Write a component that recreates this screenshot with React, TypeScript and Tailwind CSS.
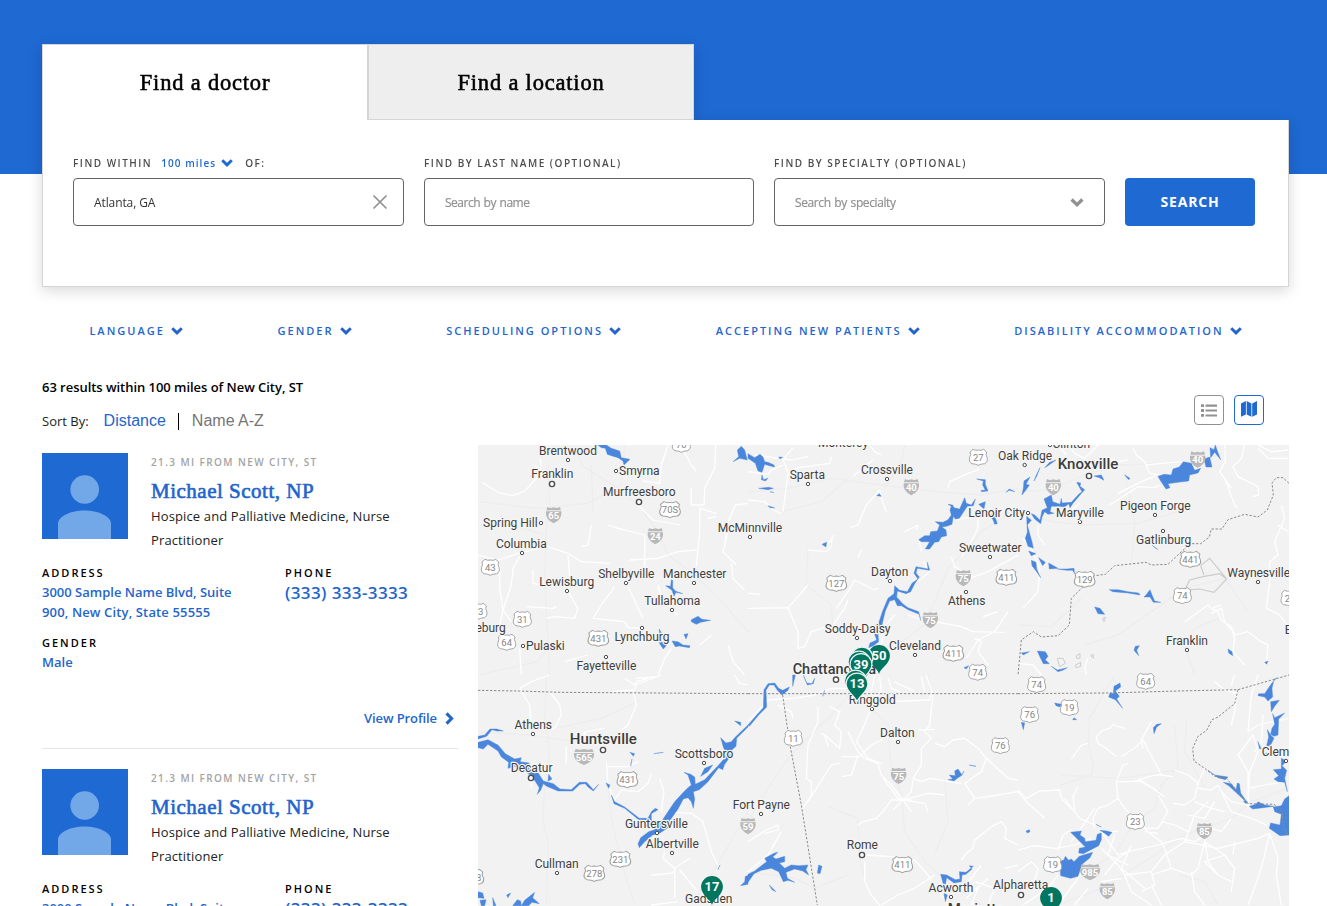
type TileId = "A" | "B" | "C" | "D" | "E" | "F";

// The map is drawn in six tiles, each in a grid three times finer than the page's pixels.
const ORIGIN: Record<TileId, [number, number]> = {
  A: [0, 0],
  B: [270, 0],
  C: [540, 0],
  D: [0, 230],
  E: [270, 230],
  F: [540, 230],
};
const TILES: TileId[] = ["A", "B", "C", "D", "E", "F"];

const ROADS: Record<TileId, string> = {
  A: "M12 112L60 142L105 152L140 138L180 95L190 60L186 40M0 330L60 345L130 322L210 305L270 325L310 350L395 355M125 335L105 370L100 420L75 495L60 560M65 360L65 430L75 495L100 530M270 330L275 400L270 440L300 490L290 520L230 515L205 520M390 240L420 250L500 270L500 365M340 240L330 300L310 305M455 345L540 340L600 320L655 315M570 0L550 60L545 115L495 108M610 5L640 60L655 80M713 0L710 70L680 130L678 180L640 180L640 130M715 205L665 190L665 260L655 365M410 425L370 480L345 520L440 530L450 548L490 550M450 425L495 520M540 420L550 460L600 510M170 60L200 100M750 260L735 320L775 360M760 355L765 400L800 435M715 215L690 220M775 175L750 230L740 300M165 375L165 415L210 425M700 570L665 600M580 610L560 640L540 690M260 650L330 630M145 485L225 490L235 484M125 610L130 690M480 180L525 225L605 240M810 175L775 180M750 600L765 650L800 690",
  B: "M0 80L60 88L70 75L105 60M105 200L120 85L150 68L245 55L250 35M0 165L50 170L75 195L100 205M400 30L380 20L365 0M375 45L320 90L345 70M395 135L405 175L415 200M395 135L355 180L330 240L307 248M600 130L605 110L660 85L690 75L690 65M180 315L235 320L250 305L252 282M235 305L258 270M135 8L105 45L120 80M0 490L120 488L150 455L180 420M120 488L150 560L150 610L170 605L190 560L250 540M300 465L290 490L245 555M265 490L310 425L320 405L380 435L390 428M440 510L410 545L400 600M525 350L545 380L510 410M625 225L690 210L690 250L665 300L640 335M520 320L515 290M610 335L620 365L675 395M560 530L640 545L675 560L770 562M780 500L740 560L690 585L655 640M705 515L750 500M560 535L480 510M680 580L700 590L690 620L720 660M470 260L510 240L505 255M330 340L340 315M0 445L38 448M20 30L130 45L180 35M640 410L720 380L810 330",
  C: "M120 0L145 30M150 0L170 25L200 40L240 0M345 10L355 30L380 50L395 85L430 90M385 60L430 55L500 50M275 180L360 125L410 128L425 120M185 175L160 195L130 205M680 0L670 40L645 65L660 95L720 125L722 150L705 155M620 0L622 50L605 80L640 130M720 10L750 40L810 40M60 240L60 270L80 300M15 280L40 310L65 370L60 440L15 490M620 100L650 180L660 190M790 180L800 220L770 290L780 330L755 350L755 410L745 490L785 510L810 545M580 490L600 500L610 525L640 545L650 570L690 560L730 590L750 600L745 660M585 488L610 480M640 545L650 580L645 620L680 660M205 690L200 665L210 640M0 655L45 660L70 690M780 240L810 260M580 505L610 490L620 530L640 555M500 530L570 480L580 490M720 0L760 20L810 15M260 35L300 50L330 45M420 90L370 110L300 145",
  D: "M125 40L160 20L215 0M125 40L155 90L160 160L230 160L250 120L245 90L215 50M400 50L465 45L475 90L450 150L430 165M440 10L470 30L550 0M470 45L475 20L510 10M300 205L325 170L380 160M265 215L265 265M385 275L450 275L480 260M385 260L390 330L410 375L430 345L480 350L510 325L520 295M545 310L558 350L550 410M545 440L590 412L640 415L675 440L700 530L725 580M560 530L555 550L590 580L635 550M590 580L590 670M605 585L655 645M520 600L575 595L590 590M520 690L600 680M0 200L60 205M160 280L160 340M320 170L310 205M770 0L785 25L810 30M540 5L475 10",
  E: "M0 140L60 75L135 70L200 60L250 40L300 40L395 65L430 80L545 75L550 50M535 0L555 60L545 150L530 170L550 190L520 220L520 270L495 310M210 95L210 140L180 210L175 310L190 320L190 360L165 400M245 95L275 110L260 150L280 170L275 220L230 180L220 175M230 180L240 215M365 110L345 160L325 200L360 250L400 265M300 170L330 230L350 250L390 265L400 300L430 330L465 375M280 245L335 245L370 210L400 195L420 180M330 240L310 300L280 305M275 265L250 270L180 380M560 205L590 215L615 195L650 190L690 220L715 250L780 310L810 315M715 250L700 290L650 325L680 370L720 365L810 350M680 370L660 390M495 310L520 320L545 310L640 325M495 315L490 350L470 370L435 405M465 375L430 375L405 410L385 430L345 440L330 450M465 375L540 355L590 360M465 375L490 410M465 375L530 385L540 410M405 310L450 370L490 375M510 165L560 163M350 540L430 545L500 555L540 600L600 690M350 560L350 620L370 660L395 692M400 690L450 660L500 640L560 600M0 500L40 475L55 465L90 450L90 465L50 475M100 470L60 540L0 590M640 555L655 535L675 520L680 495L730 455L760 440L775 460L770 490L810 510M370 50L380 0M395 5L400 50L385 60M420 10L430 40L455 50M440 20L500 50M90 90L130 110L135 130M520 5L530 50M640 650L700 570M655 670L720 610M670 690L690 640L640 640M720 690L740 640L680 620M300 40L290 10M770 580L810 570",
  F: "M0 345L25 370L65 348L125 345L130 370L165 405L140 370M0 350L30 385L80 430M160 252L190 210L210 205M290 145L275 160L255 165L235 185L240 205L265 220L295 245M285 150L320 160M310 245L355 215L375 195L415 270L430 300L465 305M375 220L370 195L400 140M295 320L315 270L330 265M295 320L370 320L405 340L415 345M295 320L300 370L270 390L240 400L225 430L230 460M360 310L390 330L440 365M345 320L410 300L430 300M470 285L510 300L540 325L560 280M540 325L530 370L500 390L465 385M540 340L580 345L600 330M530 380L580 400L620 410M300 370L320 400L390 470L430 500L440 520M230 450L185 430L170 410L165 365L180 335M0 525L50 512L110 520L170 510L220 490M160 500L210 430L230 400M120 525L135 480L160 465M260 600L300 550L330 530L420 510L490 490L530 500L560 480M250 520L300 570L320 600L400 590L410 630L370 650M400 590L440 540L500 500L530 420L570 380M440 520L460 580L520 600L540 580M320 600L340 650L400 690M460 580L400 600M250 620L310 610M210 640L170 690M120 690L210 570M560 490L570 560L600 600L640 620M560 500L620 540L650 580L640 650M540 580L560 500M500 500L600 520L720 490L755 475L780 550L775 600L790 690M755 475L735 560L720 610L690 690M600 330L640 410L700 430L745 450M610 350L640 380L690 390L710 400M690 395L695 290L720 230L705 180L660 240L690 290L690 380M690 340L740 330L800 320M590 20L620 45L655 55L650 110L640 150M650 0L640 30M720 0L700 60L690 170L720 150L810 130M735 120L730 200L710 230M330 530L300 540L250 470L300 470M380 470L420 475M620 540L560 560L600 600M400 630L430 690M510 470L470 450L430 440M650 500L645 540M520 590L530 650L560 690M290 480L270 540L330 570M340 510L310 580L380 640M640 430L610 470L580 460M15 690L90 640L120 600M0 590L40 560L60 580L50 620M590 380L560 430L510 420M420 360L450 410L420 460L380 460",
};

const FAINT: Record<TileId, string> = {
  A: "M210 60L215 180L205 240L200 400L215 690M290 0L310 60L420 130L480 180L540 260L570 330L640 380L740 480L810 560M0 240L100 240L200 270M440 0L430 120L330 175L180 190L0 170M340 60L345 200M0 690L180 650L215 600",
  B: "M0 140L120 130L250 100L400 120L560 140L700 150L810 130M100 200L220 170L300 100M810 190L700 260L640 330L600 370L560 470L530 540L420 620M180 310L175 420L250 480L255 560M470 0L460 50L410 130",
  C: "M0 140L100 135L200 90L300 60L450 55L530 50L600 30M10 200L100 230L200 240L360 235L480 200M200 600L300 570L400 500L500 430L620 400L690 500M530 690L500 600L530 550L600 520M320 80L350 230L340 360M0 540L100 545L190 460",
  D: "M205 0L200 140L215 220L200 330L195 440L210 500L205 690M230 160L370 130L480 80M390 340L400 430L430 560L470 690M810 410L700 600L640 690M0 170L150 180L300 200",
  E: "M0 440L60 340L120 250L250 120L330 30M370 100L420 150L430 300L460 350L470 470L530 560L600 620L700 690M240 395L330 430L335 550L350 610M0 590L140 610L200 640L300 600M540 0L550 60M590 320L600 440L560 540M335 60L345 0",
  F: "M215 120L210 200L225 270L220 300L130 330M470 150L480 280L430 330L410 400L350 440L290 540L200 590M810 340L700 380L640 430L500 480L380 560L250 640L120 690M505 140L500 230L540 300L560 340M290 0L260 50L215 130M130 300L300 310L480 285M600 690L560 620L480 600",
};

const WATER: Record<TileId, string> = {
  A: "M360 0L370 8L382 10L388 28L400 32L420 38L435 48L438 60L456 43L430 38L425 18L400 10L385 0ZM765 50L782 35L778 15L790 4L800 15L808 45L785 40ZM563 422L578 424L580 404L584 406L584 428L592 438L614 446L594 442L588 454L582 436ZM640 524L660 514L672 523L698 526L668 532L655 538L640 530ZM544 552L552 568L550 590L566 600L556 612L545 596ZM582 588L600 590L615 600L636 602L634 608L604 603L592 605ZM618 568L630 566L624 582Z",
  B: "M0 26L20 38L36 28L45 36L50 50L60 52L78 60L80 66L64 62L50 58L42 82L30 78L22 55L0 40ZM92 36L104 37L96 42ZM42 90L46 104L60 100L52 108L40 104ZM32 130L62 127L76 130L60 134ZM60 182L80 189L66 188ZM66 140L78 143ZM386 152L394 146L400 154ZM222 298L236 292L234 306ZM686 102L712 104L712 118L720 138L700 140L700 136L712 136L704 120L706 108ZM774 142L784 132L800 140L784 136ZM692 178L712 170L708 192ZM512 284L530 272L545 272L548 260L568 258L575 240L562 230L585 232L600 224L610 210L606 195L610 184L600 178L614 180L618 188L635 192L650 158L655 175L670 180L682 162L676 182L658 184L650 196L634 220L622 222L616 214L612 238L596 244L582 246L594 255L596 272L580 276L572 290L560 292L545 312L532 312L545 290L520 290ZM720 205L740 212L748 236L740 238L735 224ZM440 422L455 436L478 440L492 415L510 402L498 385L504 365L540 372L538 352L545 376L508 370L504 384L514 396L500 416L488 440L474 446L448 438L446 456L464 476L480 488L512 500L518 526L514 508L480 494L460 482L448 482L440 464L425 468L412 498L404 530L398 562L390 566L392 590L376 602L362 608L366 594L386 585L380 568L388 560L394 528L404 498L420 460L438 446ZM648 668L662 662L655 672Z",
  C: "M114 45L95 52L80 68L90 62ZM66 68L54 92L48 108L56 94ZM36 96L18 108L16 130L12 150L26 132L34 120L24 118ZM78 162L100 150L104 170L126 178L130 160L132 174L160 172L182 148L192 140L176 112L188 114L186 124L200 134L186 150L164 176L156 188L152 176L140 186L124 184L100 184L96 200L108 205L90 208L80 200L72 216L68 236L50 222L40 206L50 210L66 226L72 196L88 188ZM228 93L250 90L258 106L244 98ZM320 90L336 100L332 104ZM420 94L438 88L460 90L465 72L484 66L496 50L520 55L530 76L548 70L540 84L515 90L512 108L480 112L450 116L456 128L444 132L428 108ZM558 42L575 36L582 66L564 66ZM576 8L588 14L592 0L596 12L608 44L590 22L578 38ZM26 214L40 226L28 240L34 262L42 290L46 310L30 304L22 280L28 262ZM32 318L54 326L40 332ZM40 346L54 352L56 372L68 398L56 380L42 362ZM62 338L82 352L74 362ZM92 354L120 370L94 372ZM118 372L146 372L168 370L170 386L164 376L146 376ZM402 300L420 314L408 306ZM274 434L300 434L330 440L362 444L366 450L330 444L284 440ZM384 450L396 434L402 450L410 468L428 472L406 472L396 456L378 456ZM230 486L246 490L260 508L240 506ZM352 604L364 602L356 616L362 632L348 616ZM10 624L34 620L16 630ZM58 618L82 620L90 634L82 644L94 656L76 656L66 636ZM100 664L118 675L148 668L134 676L120 680ZM630 612L642 620L644 632L632 624ZM740 652L750 648L746 658Z",
  D: "M0 184L20 180L36 162L56 162L76 168L56 168L42 164L26 184L0 192ZM0 202L30 194L60 210L82 236L110 252L130 248L126 260L154 264L150 276L178 290L196 318L226 326L246 342L280 344L304 322L326 322L346 344L362 328L346 348L330 336L322 326L306 328L284 348L240 348L206 334L196 326L188 346L178 358L184 338L166 310L140 286L110 274L90 280L92 262L70 246L60 228L30 208L16 222L0 218ZM384 324L396 330L392 340ZM212 298L222 312L210 318ZM456 232L470 236L466 244ZM528 236L556 232ZM462 252L458 274ZM400 360L410 380L440 396L484 430L510 430L520 410L532 400L540 404L520 416L520 436L550 440L590 380L616 352L628 340L640 330L630 300L618 292L638 298L650 306L652 328L680 314L720 272L740 250L745 240L736 216L728 188L744 204L760 200L770 188L810 150L810 156L776 190L774 214L762 224L750 236L760 240L740 268L734 284L722 278L690 320L664 344L646 350L650 372L646 400L640 380L630 368L616 372L600 402L576 436L570 458L546 474L524 480L500 500L484 518L480 506L488 488L512 470L530 464L510 440L482 434L440 400L408 386ZM668 304L680 280L704 270L690 290ZM770 138L788 142L788 152ZM720 584L726 570ZM788 632L800 620L802 604L810 602L810 628ZM0 650L14 654L18 670L0 668ZM6 676L24 674L20 692L10 692ZM44 668L54 692L46 692ZM86 660L98 654L90 668ZM104 692L118 674L128 678L130 692ZM130 692L140 676L170 652L164 668L184 686L162 682L152 692Z",
  E: "M0 150L28 118L46 98L48 44L60 26L80 24L92 40L104 46L124 36L120 46L102 60L88 46L78 30L64 30L54 46L56 96L34 118L4 154ZM134 0L142 0L134 34ZM166 0L176 24L192 26L200 10L196 26L178 30ZM224 64L230 46ZM600 314L614 312L604 300L622 302L620 288L630 282L642 300L648 288L640 302L630 308L618 318ZM664 270L684 274L672 272ZM0 598L20 588L56 560L50 550L80 534L90 532L74 546L84 552L110 544L110 560L94 564L110 580L130 570L152 572L180 570L174 584L182 600L164 588L140 582L114 592L118 610L140 622L120 616L106 620L92 590L70 580L40 586L18 596L0 622ZM64 630L84 650L72 644ZM212 570L222 574L216 596L208 594ZM578 598L596 600L622 614L636 612L634 590L654 592L676 574L664 572L672 582L654 598L642 600L640 620L618 624L596 608L590 640L598 640L590 644L584 620ZM588 655L598 660L592 680Z",
  F: "M288 34L306 24L308 36L292 48L304 64L296 72L314 100L292 74L272 66L276 54L286 56ZM110 84L130 88L126 96L114 92ZM168 128L176 134L164 134ZM10 142L20 144L16 164ZM406 158L416 148L430 146L416 156L408 176ZM776 8L768 14L762 40L764 66L750 78L740 66L720 62L722 56L740 56L752 38L762 24ZM758 80L784 76L770 94L760 110ZM764 116L770 128L800 114L782 132L780 180L768 184L758 178L762 160L770 148ZM748 164L758 180L768 190L756 214L746 212L752 186ZM720 200L730 222L724 220ZM734 236L764 232L760 240ZM790 250L806 258L792 272L806 286L800 310L808 350L800 322L780 320L768 312L782 302L766 284L790 282ZM570 286L590 300L630 306L622 314L600 308ZM616 322L640 326L654 344L658 324L664 326L668 354L690 386L660 358L634 334ZM676 378L688 380L684 386ZM694 394L714 388L720 380L740 390L768 394L736 398L704 402ZM766 396L790 392L800 372L813 362L813 480L786 482L754 460L758 444L786 450L790 418L770 410ZM158 472L190 468L186 480L200 490L202 500L234 496L238 478L250 474L250 494L242 512L196 536L182 534L184 520L202 516ZM246 466L266 468L282 472L272 484L262 476ZM234 448L250 456ZM126 560L138 554L142 544L152 556L160 552L168 560L184 544L224 532L216 548L192 568L180 604L158 610L128 602ZM24 468L34 464L36 470L28 474Z",
};

const BORDERS: Record<TileId, string> = {
  A: "",
  B: "",
  C: "M813 115L795 98L775 98L762 114L766 150L748 195L720 216L680 208L630 224L612 252L580 252L574 276L548 296L516 296L450 358L400 360L384 352L290 362L262 388L230 392L190 430L160 460L154 540L120 572L70 576L46 560L10 585L0 690",
  D: "M0 46L120 48L250 52L810 56",
  E: "M0 56L810 56M104 60L124 200L160 390L208 690",
  F: "M0 56L270 54L480 48L660 44L730 24L813 0M660 44L650 86L600 126L582 134L566 166L540 184L524 220L528 258L560 280L590 304L622 306L654 344L690 386L768 388L792 408L796 450L808 480",
};

type Label = [TileId, number, number, string, ("big" | "mid")?];
const LABELS: Label[] = [
  ["A", 270, 30, "Brentwood"], ["A", 223, 99, "Franklin"], ["A", 484, 90, "Smyrna"], ["A", 484, 153, "Murfreesboro"],
  ["A", 97, 247, "Spring Hill"], ["A", 130, 310, "Columbia"], ["A", 445, 400, "Shelbyville"], ["A", 650, 400, "Manchester"],
  ["A", 266, 424, "Lewisburg"], ["A", 583, 481, "Tullahoma"], ["A", -30, 562, "Lawrenceburg"], ["A", 202, 615, "Pulaski"],
  ["A", 492, 589, "Lynchburg"], ["A", 385, 675, "Fayetteville"], ["A", 816, 262, "McMinnville"],
  ["B", 285, 7, "Monterey"], ["B", 178, 103, "Sparta"], ["B", 417, 88, "Crossville"], ["B", 831, 46, "Oak Ridge"],
  ["B", 746, 217, "Lenoir City"], ["B", 727, 322, "Sweetwater"], ["B", 425, 394, "Dayton"], ["B", 656, 481, "Athens"],
  ["B", 329, 565, "Soddy-Daisy"], ["B", 501, 616, "Cleveland"],
  ["C", 160, 9, "Clinton"], ["C", 210, 73, "Knoxville", "big"], ["C", 186, 217, "Maryville"], ["C", 412, 196, "Pigeon Forge"],
  ["C", 437, 298, "Gatlinburg"], ["C", 722, 397, "Waynesville"], ["C", 507, 601, "Franklin"], ["C", 852, 568, "Easley"],
  ["D", 166, 163, "Athens"], ["D", 376, 208, "Huntsville", "big"], ["D", 678, 250, "Scottsboro"], ["D", 161, 292, "Decatur"],
  ["D", 535, 460, "Guntersville"], ["D", 583, 520, "Albertville"], ["D", 236, 580, "Cullman"], ["D", 692, 685, "Gadsden"],
  ["E", 40, 403, "Fort Payne"], ["E", 373, 88, "Ringgold"], ["E", 448, 187, "Dalton"], ["E", 343, 523, "Rome"],
  ["E", 609, 652, "Acworth"], ["E", 818, 642, "Alpharetta"], ["E", 684, 717, "Marietta", "big"],
  ["E", 259, -2, "Chattanooga", "mid"], ["F", 802, 243, "Clemson"],
];

const DOTS: [TileId, number, number, number?][] = [
  ["A", 270, 45], ["A", 222, 117, 8], ["A", 414, 78], ["A", 483, 171, 8], ["A", 189, 234], ["A", 132, 324], ["A", 444, 414],
  ["A", 648, 414], ["A", 267, 438], ["A", 582, 495], ["A", 135, 603], ["A", 492, 549], ["A", 384, 636],
  ["B", 6, 276], ["B", 180, 117], ["B", 417, 102], ["B", 726, 336], ["B", 426, 408], ["B", 654, 441], ["B", 327, 579], ["B", 501, 630],
  ["C", 96, 0], ["C", 20, 60], ["C", 213, 93, 8], ["C", 30, 204], ["C", 186, 231], ["C", 411, 210], ["C", 435, 258], ["C", 720, 411], ["C", 507, 615],
  ["D", 165, 177], ["D", 375, 225, 8], ["D", 678, 264], ["D", 159, 309, 8], ["D", 537, 474], ["D", 582, 534], ["D", 237, 594],
  ["E", 264, 14, 8], ["E", 372, 102], ["E", 450, 201], ["E", 39, 417], ["E", 342, 540, 8], ["E", 609, 666],
  ["F", 9, 660, 8], ["F", 804, 258],
];

const US_ROUTES: [TileId, number, number, string][] = [
  ["A", 37, 367, "43"], ["A", 0, 499, "43"], ["A", 133, 523, "31"], ["A", 86, 592, "64"], ["A", 361, 580, "431"], ["A", 576, 194, "70S"], ["A", 610, -2, "70"],
  ["B", 691, 37, "27"], ["B", 265, 415, "127"], ["B", 775, 397, "411"], ["B", 616, 625, "411"], ["B", 689, 682, "74"],
  ["C", 517, 343, "441"], ["C", 200, 403, "129"], ["C", 493, 452, "74"], ["C", 816, 460, "25"],
  ["D", 448, 314, "431"], ["D", 427, 553, "231"], ["D", 349, 595, "278"], ["D", -14, 607, "278"],
  ["E", 136, 190, "11"], ["E", 757, 212, "76"], ["E", 463, 569, "411"],
  ["F", 56, 29, "74"], ["F", 383, 19, "64"], ["F", 154, 98, "19"], ["F", 35, 119, "76"], ["F", 352, 440, "23"], ["F", 104, 569, "19"],
];

const INTERSTATES: [TileId, number, number, string][] = [
  ["A", 227, 211, "65"], ["A", 532, 274, "24"], ["B", 490, 127, "40"], ["B", 646, 400, "75"], ["B", 547, 526, "75"],
  ["C", 539, 44, "40"], ["C", 106, 127, "40"], ["D", 318, 246, "565"], ["E", 452, 303, "75"], ["E", 0, 454, "59"],
  ["F", 559, 469, "85"], ["F", 216, 592, "985"], ["F", 268, 649, "85"],
];

const at = (t: TileId, x: number, y: number): [number, number] => [ORIGIN[t][0] + x / 3, ORIGIN[t][1] + y / 3];

function Chevron({ className }: { className: string }) {
  return (
    <svg viewBox="0 0 12 8" className={className} fill="none" stroke="currentColor" strokeWidth="2.9">
      <path d="M1.2 1.3L6 5.9L10.8 1.3" />
    </svg>
  );
}

function Pin({ x, y, label, ring = true }: { x: number; y: number; label?: string; ring?: boolean }) {
  return (
    <g transform={`translate(${x} ${y})`}>
      <path
        d="M0 18C-1.5 12 -10.9 8 -10.9 0A10.9 10.9 0 1 1 10.9 0C10.9 8 1.5 12 0 18Z"
        fill="#00755f"
        stroke={ring ? "#e9f3f1" : "none"}
        strokeWidth="1.2"
      />
      {label && (
        <text y="4" textAnchor="middle" className="fill-white font-['Roboto',sans-serif] text-[13px] font-bold">
          {label}
        </text>
      )}
    </g>
  );
}

function ResultsMap() {
  return (
    <svg viewBox="0 0 811 461" width="811" height="461" className="block bg-[#f2f2f2]" fill="none">
      {TILES.map((t) => (
        <g key={t} transform={`translate(${ORIGIN[t][0]} ${ORIGIN[t][1]}) scale(0.333333)`} strokeLinejoin="round">
          <path d={FAINT[t]} stroke="#ededed" strokeWidth="4" />
          <path d={ROADS[t]} stroke="#ffffff" strokeWidth="3.8" />
        </g>
      ))}
      {TILES.map((t) => (
        <g key={t} transform={`translate(${ORIGIN[t][0]} ${ORIGIN[t][1]}) scale(0.333333)`} strokeLinejoin="round">
          <path d={WATER[t]} fill="#4a87dc" stroke="#4a87dc" strokeWidth="1.2" />
          <path d={BORDERS[t]} stroke="#8a8a8a" strokeWidth="3" strokeDasharray="7 5" />
        </g>
      ))}
      <g transform="translate(540 0) scale(0.333333)" stroke="#cccccc" strokeWidth="3.5">
        <path d="M548 362L575 340L626 402L588 442L545 432L500 435L515 405L555 395L605 386L626 402M548 362L558 390" />
        <path d="M118 640L135 640L142 655L125 665ZM175 632L186 626L186 640L176 640ZM172 660L188 652L188 664L174 668ZM218 632L226 628L226 640ZM254 520L262 516L258 530Z" strokeWidth="3" />
      </g>
      {DOTS.map(([t, x, y, r], i) => {
        const [cx, cy] = at(t, x, y);
        return <circle key={i} cx={cx} cy={cy} r={r ? 2.6 : 1.7} fill="#fff" stroke="#4d4d4d" strokeWidth={r ? 1.4 : 1} />;
      })}
      {US_ROUTES.map(([t, x, y, n], i) => {
        const [cx, cy] = at(t, x, y);
        const wide = n.length > 2 ? 1.14 : 1;
        return (
          <g key={i} transform={`translate(${cx} ${cy})`}>
            <path
              transform={`scale(${0.3333 * wide} 0.3333)`}
              d="M-16 -24Q-8 -19 0 -22Q8 -19 16 -24L25 -16Q21 -8 26 0Q30 14 19 19Q6 20 0 24Q-6 20 -19 19Q-30 14 -26 0Q-21 -8 -25 -16Z"
              fill="#fff"
              stroke="#a0a0a0"
              strokeWidth="2.8"
            />
            <text y="3.6" textAnchor="middle" className="fill-[#858585] font-['Roboto',sans-serif] text-[9.5px]">
              {n}
            </text>
          </g>
        );
      })}
      {INTERSTATES.map(([t, x, y, n], i) => {
        const [cx, cy] = at(t, x, y);
        const wide = n.length > 2 ? 1.3 : 1;
        return (
          <g key={i} transform={`translate(${cx} ${cy})`}>
            <path
              transform={`scale(${0.3333 * wide} 0.3333)`}
              d="M-19 -25Q-10 -19 0 -24Q10 -19 19 -25L22 -15H-22ZM-23 -12H23Q26 12 0 24Q-26 12 -23 -12Z"
              fill="#b8b8b8"
            />
            <text y="3.5" textAnchor="middle" className="fill-white font-['Roboto',sans-serif] text-[9.5px] font-bold">
              {n}
            </text>
          </g>
        );
      })}
      {LABELS.map(([t, x, y, name, size], i) => {
        const [cx, cy] = at(t, x, y);
        return (
          <text
            key={i}
            x={cx}
            y={cy}
            textAnchor="middle"
            paintOrder="stroke"
            stroke="#f5f5f5"
            strokeWidth="2.4"
            strokeLinejoin="round"
            className={
              size === "big"
                ? "fill-[#3c3c3c] font-['Roboto',sans-serif] text-[15px] font-medium"
                : size === "mid"
                  ? "fill-[#3c3c3c] font-['Roboto',sans-serif] text-[14.5px] font-medium"
                  : "fill-[#3f3f3f] font-['Roboto',sans-serif] text-[12px]"
            }
          >
            {name}
          </text>
        );
      })}
      <Pin x={401} y={211} label="50" ring={false} />
      <Pin x={384} y={213} />
      <Pin x={381} y={217} />
      <Pin x={383} y={219.5} label="39" />
      <Pin x={377.5} y={236} />
      <Pin x={379} y={239} label="13" />
      <Pin x={234} y={442} label="17" ring={false} />
      <Pin x={573} y={453} label="1" ring={false} />
    </svg>
  );
}

function Field({ label, children }: { label: React.ReactNode; children: React.ReactNode }) {
  return (
    <div>
      <div className="flex h-[14px] items-center text-[10px] leading-[14px] font-semibold tracking-[1.5px] whitespace-nowrap text-[#4d4d4f]">
        {label}
      </div>
      <div className="mt-2 flex h-12 items-center justify-between rounded-[4px] border border-[#636466] px-5 text-[12px]">
        {children}
      </div>
    </div>
  );
}

function DoctorCard() {
  return (
    <article className="mb-5 border-b border-[#e6e6e6] pb-5">
      <div className="flex">
        <svg viewBox="0 0 86 86" className="size-[86px] shrink-0 bg-[#1e69d2]" fill="#72a8e8">
          <circle cx="42.7" cy="36.5" r="14.3" />
          <path d="M16 86V70C17 63 29 57.5 42.5 57.5S68 63 69 70V86Z" />
        </svg>
        <div className="ml-[23px]">
          <p className="text-[10px] leading-[18px] font-semibold tracking-[1.4px] text-[#a3a3a3]">21.3 MI FROM NEW CITY, ST</p>
          <h3 className="mt-[6px] font-['Liberation_Serif',serif] text-[21px] leading-[28px] tracking-[0.5px] text-[#2364cc] [-webkit-text-stroke:0.6px_#2364cc]">
            Michael Scott, NP
          </h3>
          <p className="-mt-px w-[260px] text-[13px] leading-[24px] tracking-[0.13px] text-[#222]">
            Hospice and Palliative Medicine, Nurse Practitioner
          </p>
        </div>
      </div>
      <div className="mt-[11px] flex text-[13px] leading-[20px] font-semibold text-[#2465cc]">
        <div className="w-[243px]">
          <h4 className="text-[11px] leading-[20px] tracking-[2px] text-black">ADDRESS</h4>
          <p className="-mt-px w-[200px]">
            3000 Sample Name Blvd, Suite <span className="tracking-[0.14px]">900, New City, State 55555</span>
          </p>
          <h4 className="mt-[11px] text-[11px] leading-[20px] tracking-[2px] text-black">GENDER</h4>
          <p className="-mt-px">Male</p>
        </div>
        <div>
          <h4 className="text-[11px] leading-[20px] tracking-[2px] text-black">PHONE</h4>
          <p className="text-[17px] tracking-[0.38px]">(333) 333-3333</p>
        </div>
      </div>
      <div className="mt-[36px] flex items-center justify-end pr-[2px] text-[13px] leading-[20px] font-semibold tracking-[-0.1px] text-[#2465cc]">
        View Profile
        <Chevron className="ml-[6px] h-[9px] w-[13px] -rotate-90" />
      </div>
    </article>
  );
}

const FILTERS = ["LANGUAGE", "GENDER", "SCHEDULING OPTIONS", "ACCEPTING NEW PATIENTS", "DISABILITY ACCOMMODATION"];

export default function App() {
  return (
    <div className="h-[906px] overflow-hidden bg-white font-['Open_Sans',sans-serif] text-black">
      <div className="h-[174px] bg-[#1e69d2]" />
      <main className="-mt-[130px] mr-[38px] ml-[42px]">
        <section className="drop-shadow-[0_4px_7px_rgba(0,0,0,0.15)]">
          <div className="flex h-[76px] w-[652px] text-center font-['Liberation_Serif',serif] text-[22.5px] leading-[75px] tracking-[0.8px] [-webkit-text-stroke:0.55px_black]">
            <div className="w-[325px] border-t border-l border-[#d5d5d5] bg-white">Find a doctor</div>
            <div className="w-[327px] border border-l-2 border-[#d5d5d5] bg-[#eeeeee]">Find a location</div>
          </div>
          <div className="grid h-[167px] grid-cols-[331px_330px_331px_130px] gap-5 border-r border-b border-l border-[#d5d5d5] bg-white pt-9 pl-[30px]">
            <Field
              label={
                <>
                  FIND WITHIN
                  <span className="ml-[9px] flex items-center tracking-[1.05px] text-[#1e69d2]">
                    100 miles
                    <Chevron className="ml-[5px] h-[8px] w-[12px]" />
                  </span>
                  <span className="ml-[12px]">OF:</span>
                </>
              }
            >
              <span className="pt-px tracking-[-0.1px] text-[#333]">Atlanta, GA</span>
              <svg viewBox="0 0 14 14" className="-mr-[4px] size-[14px]" stroke="#919191" strokeWidth="1.7" strokeLinecap="round">
                <path d="M1 1L13 13M13 1L1 13" />
              </svg>
            </Field>
            <Field label="FIND BY LAST NAME (OPTIONAL)">
              <span className="pt-px tracking-[-0.5px] text-[#919191] [word-spacing:1px] [-webkit-text-stroke:0.2px_#919191]">Search by name</span>
            </Field>
            <Field label="FIND BY SPECIALTY (OPTIONAL)">
              <span className="pt-px tracking-[-0.4px] text-[#919191] [word-spacing:1px] [-webkit-text-stroke:0.2px_#919191]">Search by specialty</span>
              <Chevron className="h-[9px] w-[14px] text-[#919191]" />
            </Field>
            <button className="mt-[22px] h-12 rounded-[4px] bg-[#1e69d2] pb-px text-[14px] font-bold tracking-[0.8px] text-white">SEARCH</button>
          </div>
        </section>

        <nav className="mt-[34px] flex h-5 items-center justify-around text-[11px] font-semibold tracking-[2px] text-[#2465cc]">
          {FILTERS.map((f) => (
            <span key={f} className="flex items-center">
              {f}
              <Chevron className="ml-[6px] h-[8px] w-[12px]" />
            </span>
          ))}
        </nav>

        <div className="mt-[36px] flex h-[68px] justify-between">
          <div>
            <h2 className="text-[13px] leading-5 font-semibold tracking-[-0.04px]">63 results within 100 miles of New City, ST</h2>
            <div className="mt-[14px] flex h-5 items-center text-[13px] text-[#222]">
              <span className="pt-0.5">Sort By:</span>
              <span className="ml-[15px] font-['Liberation_Sans',sans-serif] text-[16px] text-[#2465cc]">Distance</span>
              <span className="ml-3 h-[17px] w-px bg-black" />
              <span className="ml-[13px] font-['Liberation_Sans',sans-serif] text-[16px] text-[#757575]">Name A-Z</span>
            </div>
          </div>
          <div className="mt-[18px] mr-[25px] flex gap-[10px]">
            <button className="flex size-[30px] items-center justify-center rounded-[4px] border border-[#919191] text-[#919191]">
              <svg viewBox="0 0 16 13" className="h-[13px] w-[16px]" fill="currentColor">
                <path d="M0 0.2H3V3H0ZM0 5.1H3V7.9H0ZM0 10H3V12.8H0ZM4.5 0.6H16V2.7H4.5ZM4.5 5.5H16V7.6H4.5ZM4.5 10.4H16V12.5H4.5Z" />
              </svg>
            </button>
            <button className="flex size-[30px] items-center justify-center rounded-[4px] border border-[#1e69d2] text-[#1e69d2]">
              <svg viewBox="0 0 16 16" className="mb-0.5 size-[16px]" fill="currentColor">
                <path d="M0 2.4L4.9 0V13.4L0 15.8ZM5.7 0L10.4 2.4V15.8L5.7 13.4ZM11.2 2.4L16 0V13.4L11.2 15.8Z" />
              </svg>
            </button>
          </div>
        </div>

        <div className="flex gap-5">
          <div className="w-[416px] pt-2">
            <DoctorCard />
            <DoctorCard />
          </div>
          <ResultsMap />
        </div>
      </main>
    </div>
  );
}
